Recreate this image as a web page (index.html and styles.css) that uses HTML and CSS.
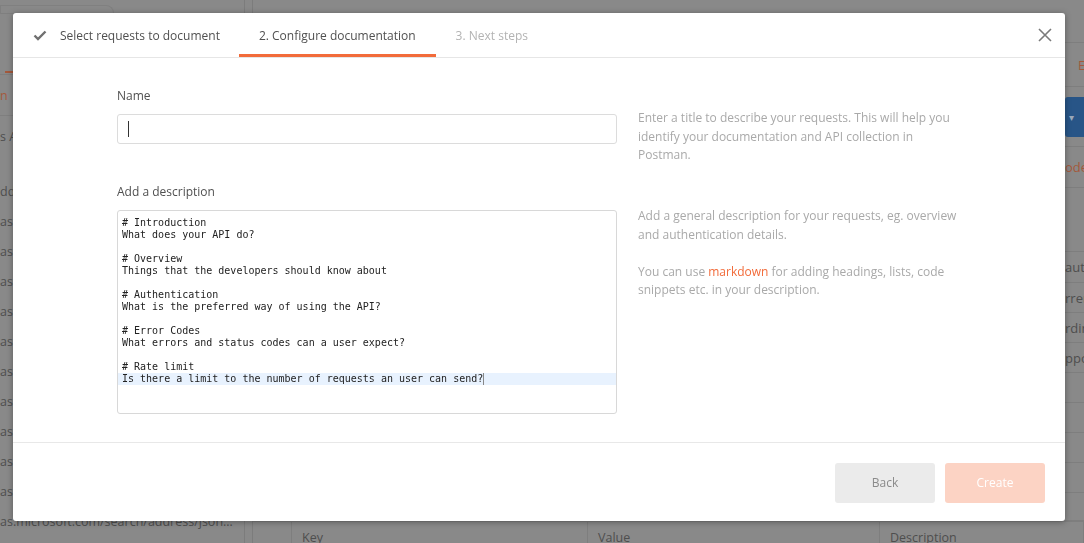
FILE: index.html
```html
<!DOCTYPE html>
<html lang="en">
<head>
<meta charset="utf-8">
<title>Configure documentation</title>
<link rel="stylesheet" href="styles.css">
</head>
<body>
<div class="app">
  <aside class="sidebar">
    <div class="sb-top"><div class="sb-toptab"></div></div>
    <div class="sb-tabs"><span class="sb-underline"></span></div>
    <div class="sb-orange">n</div>
    <div class="sb-search">s API</div>
    <div class="sb-row">ddress</div>
    <div class="sb-row">as.microsoft.com/search/address/json</div>
    <div class="sb-row">as.microsoft.com/search/address/json</div>
    <div class="sb-row">as.microsoft.com/search/address/json</div>
    <div class="sb-row">as.microsoft.com/search/address/json</div>
    <div class="sb-row">as.microsoft.com/search/address/json</div>
    <div class="sb-row">as.microsoft.com/search/address/json</div>
    <div class="sb-row">as.microsoft.com/search/address/json</div>
    <div class="sb-row">as.microsoft.com/search/address/json</div>
    <div class="sb-row">as.microsoft.com/search/address/json</div>
    <div class="sb-row">as.microsoft.com/search/address/json</div>
    <div class="sb-row">as.microsoft.com/search/address/json?api-version</div>
  </aside>
  <div class="gutter"></div>
  <main class="main">
    <div class="mrow h43"><span></span><span class="mcell"></span></div>
    <div class="mrow h44"><span></span><span class="mcell orange pad">Edit</span></div>
    <div class="mrow h60"><span></span><span class="mcell"><span class="blue-btn">▾</span></span></div>
    <div class="mrow h41"><span></span><span class="mcell orange">odes</span></div>
    <div class="mrow h64"><span></span><span class="mcell"></span></div>
    <div class="mrow h31"><span></span><span class="mcell">auth</span></div>
    <div class="mrow h30"><span></span><span class="mcell">rrent</span></div>
    <div class="mrow h30"><span></span><span class="mcell">rdin</span></div>
    <div class="mrow h30"><span></span><span class="mcell">ppor</span></div>
    <div class="mrow h30"><span></span><span class="mcell"></span></div>
    <div class="mrow h30"><span></span><span class="mcell"></span></div>
    <div class="mrow h30"><span></span><span class="mcell"></span></div>
    <div class="mrow h30"><span></span><span class="mcell"></span></div>
    <div class="mrow h28"><span></span><span class="mcell"></span></div>
    <div class="kv-head">
      <span class="kv-chk"></span>
      <span class="kv-col">Key</span>
      <span class="kv-col">Value</span>
      <span class="kv-col">Description</span>
    </div>
  </main>
</div>

<div class="overlay">
  <div class="modal">
    <div class="tabs">
      <div class="tab done">
        <svg class="check" width="14" height="11" viewBox="0 0 14 11"><path d="M1.5 5.5 L5 9 L12.5 1.5" fill="none" stroke="#707070" stroke-width="2.4"/></svg>
        <span>Select requests to document</span>
      </div>
      <div class="tab active"><span>2. Configure documentation</span></div>
      <div class="tab muted"><span>3. Next steps</span></div>
      <button class="close" aria-label="Close">
        <svg width="14" height="14" viewBox="0 0 14 14"><path d="M1 1 L13 13 M13 1 L1 13" stroke="#7a7a7a" stroke-width="1.6"/></svg>
      </button>
    </div>

    <div class="body">
      <div class="field">
        <label class="label">Name</label>
        <div class="input"><span class="caret"></span></div>
      </div>
      <div class="help first">
        <p>Enter a title to describe your requests. This will help you identify your documentation and API collection in Postman.</p>
      </div>

      <div class="field">
        <label class="label">Add a description</label>
        <div class="editor">
          <div class="line"># Introduction</div>
          <div class="line">What does your API do?</div>
          <div class="line">&nbsp;</div>
          <div class="line"># Overview</div>
          <div class="line">Things that the developers should know about</div>
          <div class="line">&nbsp;</div>
          <div class="line"># Authentication</div>
          <div class="line">What is the preferred way of using the API?</div>
          <div class="line">&nbsp;</div>
          <div class="line"># Error Codes</div>
          <div class="line">What errors and status codes can a user expect?</div>
          <div class="line">&nbsp;</div>
          <div class="line"># Rate limit</div>
          <div class="line current">Is there a limit to the number of requests an user can send?<span class="caret small"></span></div>
        </div>
      </div>
      <div class="help second">
        <p>Add a general description for your requests, eg. overview and authentication details.</p>
        <p>You can use <a class="link">markdown</a> for adding headings, lists, code snippets etc. in your description.</p>
      </div>
    </div>

    <div class="footer">
      <button class="btn back">Back</button>
      <button class="btn create">Create</button>
    </div>
  </div>
</div>
</body>
</html>
```

FILE: styles.css
```css
* { box-sizing: border-box; }

html, body {
  margin: 0;
  width: 1084px;
  height: 543px;
  overflow: hidden;
}

body {
  font-family: "Open Sans", "Liberation Sans", sans-serif;
  font-size: 12px;
  background: #898989;
  color: #505050;
}

/* ---------- dimmed background app ---------- */
.app {
  display: flex;
  height: 543px;
  color: #4e4e4e;
}

.sidebar {
  width: 245px;
  flex: none;
  border-right: 1px solid #7c7c7c;
  display: flex;
  flex-direction: column;
  overflow: hidden;
  font-size: 12.5px;
}

.sb-top {
  height: 14px;
  padding: 5px 130px 0 0;
  border-bottom: 1px solid #7f7f7f;
}
.sb-toptab {
  height: 9px;
  border: 1px solid #808080;
  border-bottom: none;
  border-radius: 0 8px 0 0;
}

.sb-tabs {
  height: 60px;
  display: flex;
  align-items: flex-end;
  padding-left: 5px;
}
.sb-underline {
  width: 8px;
  height: 2px;
  margin-bottom: 1px;
  background: #a4593c;
}

.sb-orange {
  height: 41px;
  line-height: 41px;
  color: #a4593c;
  border-top: 1px solid #7f7f7f;
}

.sb-search {
  height: 62px;
  line-height: 42px;
  border-top: 1px solid #7f7f7f;
}

.sb-row {
  height: 30px;
  line-height: 30px;
  white-space: nowrap;
  overflow: hidden;
  text-overflow: ellipsis;
  width: 235px;
}

.gutter {
  width: 8px;
  flex: none;
  border-right: 1px solid #7c7c7c;
}

.main {
  flex: 1;
  display: flex;
  flex-direction: column;
  min-width: 0;
}

.mrow {
  display: grid;
  grid-template-columns: 1fr 19px;
  border-bottom: 1px solid #7e7e7e;
  flex: none;
}
.h43 { height: 43px; }
.h44 { height: 44px; }
.h60 { height: 60px; }
.h41 { height: 41px; }
.h64 { height: 64px; }
.h31 { height: 31px; }
.h30 { height: 30px; }
.h28 { height: 28px; }

.mcell {
  display: flex;
  align-items: center;
  overflow: hidden;
  white-space: nowrap;
  font-size: 13px;
}
.mcell.orange { color: #a4593c; }
.mcell.pad { padding-left: 13px; }

.blue-btn {
  width: 19px;
  height: 40px;
  background: #285587;
  border-radius: 3px 0 0 3px;
  color: #9aa9bb;
  font-size: 10px;
  display: flex;
  align-items: center;
  justify-content: center;
  padding-right: 6px;
}

.kv-head {
  display: grid;
  grid-template-columns: 39px 296px 292px 1fr;
  flex: 1;
  border-top: 1px solid #7e7e7e;
  font-size: 12.5px;
}
.kv-chk { border-right: 1px solid #7e7e7e; }
.kv-col {
  border-right: 1px solid #7e7e7e;
  padding: 7px 10px 0;
  white-space: nowrap;
  overflow: hidden;
}

/* ---------- modal ---------- */
.overlay {
  position: fixed;
  inset: 0;
  padding: 13px 19px 22px 13px;
  display: flex;
}

.modal {
  flex: 1;
  background: #fff;
  border-radius: 3px;
  box-shadow: 0 1px 6px rgba(0, 0, 0, 0.35);
  display: flex;
  flex-direction: column;
}

.tabs {
  display: flex;
  border-bottom: 1px solid #e6e6e6;
}

.tab {
  height: 44px;
  padding: 0 20px;
  display: flex;
  align-items: center;
  gap: 13px;
  border-bottom: 3px solid transparent;
  padding-top: 3px;
  font-size: 12px;
  color: #505050;
  white-space: nowrap;
}
.tab.done { padding-right: 19px; }
.tab.active { border-bottom-color: #f26b3a; }
.tab.muted { color: #b3b3b3; }
.check { flex: none; }

.close {
  margin-left: auto;
  border: none;
  background: none;
  padding: 0 13px 0 0;
  display: flex;
  align-items: center;
  cursor: pointer;
}

.body {
  display: grid;
  grid-template-columns: 500px 330px;
  grid-template-rows: 57px auto;
  column-gap: 21px;
  row-gap: 38px;
  padding: 29px 0 28px 104px;
}

.field {
  display: flex;
  flex-direction: column;
}

.label {
  font-size: 12px;
  line-height: 18px;
  color: #505050;
  margin-bottom: 9px;
}

.field + .help + .field .label { margin-top: 1px; margin-bottom: 9px; }

.input {
  height: 30px;
  border: 1px solid #dcdcdc;
  border-radius: 3px;
  padding: 6px 10px;
  display: flex;
}

.caret {
  width: 1px;
  height: 16px;
  background: #333;
}

.editor {
  height: 204px;
  border: 1px solid #d8d8d8;
  border-radius: 3px;
  padding-top: 6px;
  font-family: "DejaVu Sans Mono", "Liberation Mono", monospace;
  font-size: 10px;
  line-height: 12px;
  color: #222;
}

.line {
  padding-left: 4px;
  white-space: pre;
}
.line.current { background: #e8f2fe; }

.caret.small {
  display: inline-block;
  vertical-align: top;
  height: 12px;
  background: #888;
}

.help {
  font-size: 12px;
  line-height: 18.5px;
  color: #a9a9a9;
  padding-right: 10px;
}
.help.first { padding-top: 22px; }
.help.second { padding-top: 25px; }
.help p { margin: 0 0 18.5px; }
.link { color: #f26b3a; }

.footer {
  margin-top: auto;
  border-top: 1px solid #e8e8e8;
  padding: 20px 20px 18px;
  display: flex;
  justify-content: flex-end;
  gap: 10px;
}

.btn {
  width: 100px;
  height: 40px;
  border: none;
  border-radius: 3px;
  padding: 0 0 2px;
  font-family: "Open Sans", "Liberation Sans", sans-serif;
  font-size: 12px;
}
.btn.back { background: #ebebeb; color: #8a8a8a; }
.btn.create { background: #fcd3c4; color: #fff; }
```
